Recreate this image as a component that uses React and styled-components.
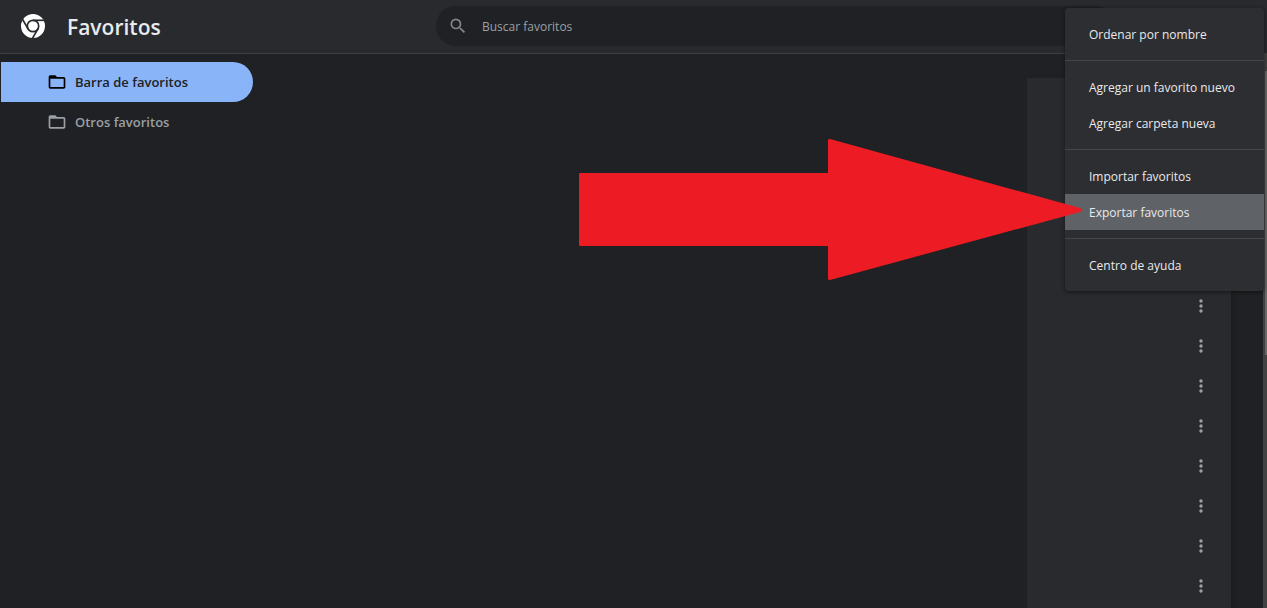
import React from 'react';
import styled, { createGlobalStyle } from 'styled-components';
import { MdFolderOpen, MdMoreVert, MdSearch } from 'react-icons/md';

const folders = [
  { name: 'Barra de favoritos', selected: true },
  { name: 'Otros favoritos', selected: false },
];

const menuGroups = [
  ['Ordenar por nombre'],
  ['Agregar un favorito nuevo', 'Agregar carpeta nueva'],
  ['Importar favoritos', 'Exportar favoritos'],
  ['Centro de ayuda'],
];

const bookmarks = Array.from({ length: 24 }, (_, i) => i);

const ChromeLogo = () => (
  <svg width="24" height="24" viewBox="0 0 24 24" aria-hidden="true">
    <circle cx="12" cy="12" r="12" fill="#fff" />
    <g fill="none" stroke="#292a2d" strokeWidth="1.7">
      <circle cx="12" cy="12" r="5.7" />
      <path d="M12 6.3H24" />
      <path d="M12 6.3H24" transform="rotate(120 12 12)" />
      <path d="M12 6.3H24" transform="rotate(240 12 12)" />
    </g>
  </svg>
);

const App = () => {
  return (
    <Page>
      <GlobalStyle />
      <Toolbar>
        <Brand>
          <ChromeLogo />
          <h1>Favoritos</h1>
        </Brand>
        <SearchBox>
          <MdSearch size={20} />
          <input type="search" placeholder="Buscar favoritos" aria-label="Buscar favoritos" />
        </SearchBox>
      </Toolbar>

      <Content>
        <Sidebar>
          {folders.map((folder) => (
            <FolderButton key={folder.name} $selected={folder.selected}>
              <MdFolderOpen size={20} />
              {folder.name}
            </FolderButton>
          ))}
        </Sidebar>
        <ListPane>
          <List>
            {bookmarks.map((id) => (
              <Row key={id}>
                <MoreButton aria-label="Más acciones">
                  <MdMoreVert size={20} />
                </MoreButton>
              </Row>
            ))}
          </List>
        </ListPane>
        <ScrollTrack>
          <ScrollThumb />
        </ScrollTrack>
      </Content>

      <Menu>
        {menuGroups.map((group) => (
          <MenuGroup key={group[0]}>
            {group.map((label) => (
              <MenuItem key={label} $active={label === 'Exportar favoritos'}>
                {label}
              </MenuItem>
            ))}
          </MenuGroup>
        ))}
      </Menu>

      <Arrow viewBox="0 0 504 142" aria-hidden="true">
        <path d="M1 34H249V1Q249 0 251 0L501 69Q505 71 501 73L251 141Q249 141 249 140V107H1Q0 107 0 106V35Q0 34 1 34Z" />
      </Arrow>
    </Page>
  );
};

export default App;


const GlobalStyle = createGlobalStyle`
  * {
    box-sizing: border-box;
  }

  body {
    margin: 0;
    background: #202124;
    color: #e8eaed;
    font-family: "Segoe UI", "Open Sans", "Noto Sans", sans-serif;
    font-size: 12px;
  }

  button,
  input {
    margin: 0;
    padding: 0;
    border: 0;
    background: none;
    color: inherit;
    font: inherit;
  }
`;

const Page = styled.div`
  position: relative;
  display: flex;
  flex-direction: column;
  height: 100vh;
  overflow: hidden;
`;

const Toolbar = styled.header`
  display: flex;
  flex: none;
  height: 54px;
  padding-top: 6px;
  background: #292a2d;
  border-bottom: 1px solid #3f4042;
`;

const Brand = styled.div`
  display: flex;
  align-items: center;
  gap: 22px;
  flex: 0 0 436px;
  height: 40px;
  padding-left: 21px;

  h1 {
    margin: 0;
    font-size: 21px;
    font-weight: 600;
    line-height: 28px;
    padding-top: 2px;
  }
`;

const SearchBox = styled.label`
  display: flex;
  align-items: center;
  gap: 14px;
  flex: 1;
  max-width: 680px;
  height: 40px;
  padding: 0 12px;
  border-radius: 20px;
  background: #202124;
  color: #80868b;

  input {
    flex: 1;
    outline: none;
    color: #e8eaed;
  }

  input::placeholder {
    color: #9aa0a6;
    opacity: 1;
  }
`;

const Content = styled.main`
  display: flex;
  flex: 1;
  min-height: 0;
`;

const Sidebar = styled.nav`
  flex: 0 0 253px;
  padding: 8px 0 0 1px;
`;

const FolderButton = styled.button`
  display: flex;
  align-items: center;
  gap: 8px;
  width: 100%;
  height: 40px;
  padding-left: 46px;
  border-radius: 0 20px 20px 0;
  background: ${({ $selected }) => ($selected ? '#8ab4f8' : 'transparent')};
  color: ${({ $selected }) => ($selected ? '#202124' : '#9aa0a6')};
  font-size: 13px;
  font-weight: 600;

  svg {
    color: ${({ $selected }) => ($selected ? '#000' : '#9aa0a6')};
  }
`;

const ListPane = styled.section`
  display: flex;
  justify-content: flex-end;
  align-items: flex-start;
  flex: 1;
  padding: 24px 32px 0 0;
  overflow: hidden;
`;

const List = styled.ul`
  width: 204px;
  margin: 0;
  padding: 8px 0;
  background: #292a2d;
  box-shadow: 4px 0 4px rgba(0, 0, 0, 0.1);
  list-style: none;
`;

const Row = styled.li`
  display: flex;
  align-items: center;
  justify-content: flex-end;
  height: 40px;
  padding-right: 20px;
`;

const MoreButton = styled.button`
  display: flex;
  color: #9aa0a6;
`;

const ScrollTrack = styled.div`
  flex: 0 0 4px;
  padding: 17px 0 0 2px;
  background: #424242;
`;

const ScrollThumb = styled.div`
  height: 284px;
  background: #686868;
`;

const Menu = styled.div`
  position: absolute;
  top: 8px;
  right: 3px;
  padding: 8px 0;
  border-radius: 4px;
  background: #2d2e31;
  box-shadow: 0 1px 4px rgba(0, 0, 0, 0.5);
`;

const MenuGroup = styled.div`
  & + & {
    margin-top: 8px;
    padding-top: 8px;
    border-top: 1px solid #444548;
  }
`;

const MenuItem = styled.button`
  display: block;
  width: 199px;
  height: 36px;
  padding: 0 24px;
  background: ${({ $active }) => ($active ? '#5f6266' : 'transparent')};
  font-weight: 500;
  text-align: left;
  white-space: nowrap;
`;

const Arrow = styled.svg`
  position: absolute;
  top: 139px;
  right: 184px;
  width: 504px;
  height: 142px;
  fill: #ed1c24;
  pointer-events: none;
`;
